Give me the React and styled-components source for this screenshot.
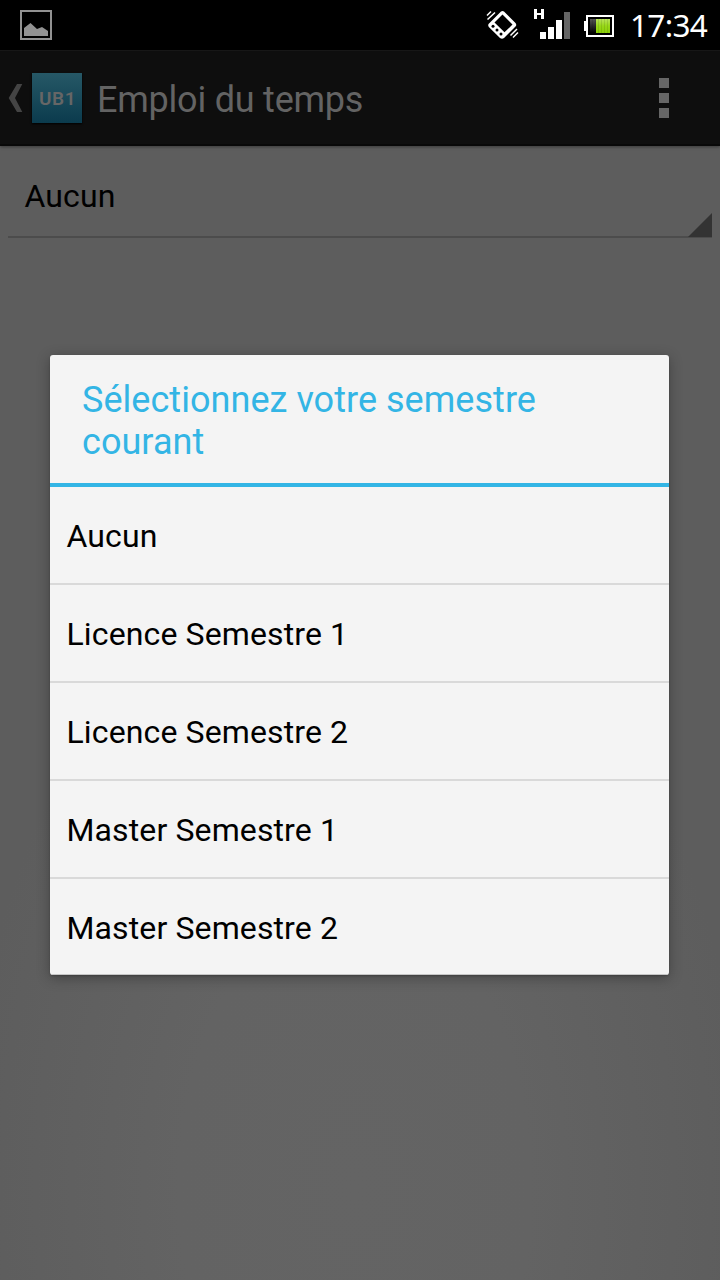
import React from "react";
import styled, { createGlobalStyle } from "styled-components";

const GlobalStyle = createGlobalStyle`
  * { box-sizing: border-box; }
  body { margin: 0; background: #5d5d5d; }
`;

const Screen = styled.div`
  position: relative;
  width: 720px;
  height: 1280px;
  overflow: hidden;
  display: flex;
  flex-direction: column;
  font-family: Roboto, sans-serif;
  background: radial-gradient(ellipse 390px 640px at 355px 1190px, #646464 0%, #636363 45%, #5d5d5d 100%);
`;

const StatusBar = styled.header`
  height: 50px;
  flex: none;
  display: flex;
  justify-content: space-between;
  background: #000;
  padding: 0 12px 0 20px;
`;

const StatusIcons = styled.div`
  display: flex;
`;

const StatusSvg = styled.svg`
  display: block;
  flex: none;
  margin-right: ${(p) => p.$gap || 0}px;
`;

const Clock = styled.time`
  width: 78px;
  font-family: "Noto Sans", sans-serif;
  font-size: 31.5px;
  line-height: 49px;
  letter-spacing: -0.7px;
  color: #fff;
  white-space: nowrap;
`;

const ActionBar = styled.nav`
  height: 96px;
  flex: none;
  display: flex;
  align-items: center;
  padding: 1px 51px 0 8px;
  background: #0e0e0e;
  border-top: 1px solid #171717;
  border-bottom: 2px solid #080808;
  box-shadow: 0 1px 3px rgba(0, 0, 0, 0.4);
`;

const AppLogo = styled.div`
  width: 50px;
  height: 50px;
  margin-left: 9px;
  padding: 1px 0 0 1px;
  display: flex;
  align-items: center;
  justify-content: center;
  background: linear-gradient(#265866, #0b3b4d);
  box-shadow: 0 1px 2px #000;
  color: #666;
  font-size: 19px;
  font-weight: 600;
  letter-spacing: 0.6px;
`;

const ScreenTitle = styled.h1`
  margin: 3px 0 0 15px;
  flex: 1;
  font-size: 36px;
  line-height: 42px;
  font-weight: 400;
  color: #636363;
  letter-spacing: -0.22px;
`;

const Overflow = styled.div`
  display: flex;
  flex-direction: column;
  gap: 5px;
`;

const OverflowDot = styled.i`
  width: 10px;
  height: 10px;
  background: #666;
`;

const Spinner = styled.div`
  height: 92px;
  margin: 0 8px;
  display: flex;
  align-items: flex-end;
  justify-content: space-between;
  border-bottom: 2px solid #4c4c4c;
`;

const SpinnerValue = styled.span`
  padding-left: 16.5px;
  margin-bottom: 21px;
  font-size: 32px;
  line-height: 38px;
  letter-spacing: 0.1px;
  color: #000;
`;

const SpinnerArrow = styled.svg`
  display: block;
  margin-bottom: -1px;
`;

const Dialog = styled.section`
  position: absolute;
  left: 50px;
  top: 355px;
  width: 619px;
  height: 620px;
  overflow: hidden;
  background: #f4f4f4;
  border-radius: 3px;
  box-shadow: 0 3px 14px rgba(0, 0, 0, 0.3), 0 1px 2px rgba(0, 0, 0, 0.2);
`;

const DialogTitle = styled.h2`
  height: 132px;
  margin: 0;
  padding: 24px 32px 0;
  border-bottom: 4px solid #33b5e5;
  font-size: 36px;
  line-height: 42px;
  font-weight: 400;
  letter-spacing: 0.04px;
  color: #33b5e5;
`;

const Options = styled.ul`
  margin: 0;
  padding: 0;
  list-style: none;
`;

const Option = styled.li`
  height: 98px;
  padding-left: 16.5px;
  border-bottom: 2px solid #d9d9d9;
  font-size: 32px;
  line-height: 98px;
  letter-spacing: 0.12px;
  color: #000;

  &:last-child {
    height: 96px;
    border-bottom: 1px solid #c6c6c6;
  }
`;

const semesters = [
  "Aucun",
  "Licence Semestre 1",
  "Licence Semestre 2",
  "Master Semestre 1",
  "Master Semestre 2",
];

function GalleryIcon() {
  return (
    <StatusSvg width="32" height="50" viewBox="0 0 32 50">
      <rect x="1" y="11" width="30" height="28" fill="none" stroke="#929292" strokeWidth="2" />
      <path d="M4 36V28L10.500 23L17 29L22 27L28 31V36Z" fill="#929292" />
    </StatusSvg>
  );
}

function VibrateIcon() {
  return (
    <StatusSvg width="34" height="50" viewBox="486 0 34 50" $gap={13}>
      <path
        fill="#fff"
        fillRule="evenodd"
        d="M501 11.500Q502.500 10.500 504 11.500L515.500 23Q517 25 515.500 26.500L504 38Q502 39.500 500 38L488.800 27Q487.500 25 489 23.500ZM502.500 14.500L494.500 22.500L504.500 32.300L512.500 24.500Z"
      />
      <g fill="#000">
        <circle cx="493" cy="26.300" r="1.500" />
        <circle cx="497" cy="30" r="1.500" />
        <circle cx="501" cy="34" r="1.500" />
      </g>
      <path
        d="M487 15.500L491 11.500M487.500 19.500L495 12.500M510.500 35.500L517 29M513 37.500L518 32.500"
        stroke="#fff"
        strokeWidth="1.500"
      />
    </StatusSvg>
  );
}

function SignalIcon() {
  return (
    <StatusSvg width="37" height="50" viewBox="533 0 37 50" $gap={14}>
      <path d="M534 9h3v4h4v-4h3v10h-3v-4h-4v4h-3z" fill="#fff" />
      <path d="M540 32h6v7h-6zM548 27h6v12h-6zM556 20h6v19h-6z" fill="#fff" />
      <path d="M564 12h6v27h-6z" fill="#656565" />
    </StatusSvg>
  );
}

function BatteryIcon() {
  return (
    <StatusSvg width="30" height="50" viewBox="584 0 30 50" $gap={16}>
      <defs>
        <linearGradient id="charge" x1="0" y1="0" x2="0" y2="1">
          <stop offset="0" stopColor="#b8e45a" />
          <stop offset="0.5" stopColor="#98d818" />
          <stop offset="1" stopColor="#8bcf08" />
        </linearGradient>
        <linearGradient id="drained" x1="0" y1="0" x2="0" y2="1">
          <stop offset="0" stopColor="#555" />
          <stop offset="1" stopColor="#000" />
        </linearGradient>
      </defs>
      <path d="M584 21h2v10h-2z" fill="#fff" />
      <rect x="587" y="16" width="26" height="20" fill="none" stroke="#fff" strokeWidth="2" />
      <path d="M590 19h6v14h-6z" fill="url(#drained)" />
      <path d="M596 19h14v14h-14z" fill="url(#charge)" />
      <path
        d="M592.500 19v14M595.500 19v14M598.500 19v14M601.500 19v14M604.500 19v14M607.500 19v14"
        stroke="#000"
        strokeOpacity="0.1"
      />
    </StatusSvg>
  );
}

export default function App() {
  return (
    <>
      <GlobalStyle />
      <Screen>
        <StatusBar>
          <GalleryIcon />
          <StatusIcons>
            <VibrateIcon />
            <SignalIcon />
            <BatteryIcon />
            <Clock>17:34</Clock>
          </StatusIcons>
        </StatusBar>
        <ActionBar>
          <svg width="15" height="28" viewBox="0 0 15 28">
            <path d="M9 0H14.300L7 14L14.300 28H9L0.700 14Z" fill="#444" />
          </svg>
          <AppLogo>UB1</AppLogo>
          <ScreenTitle>Emploi du temps</ScreenTitle>
          <Overflow>
            <OverflowDot />
            <OverflowDot />
            <OverflowDot />
          </Overflow>
        </ActionBar>
        <Spinner>
          <SpinnerValue>Aucun</SpinnerValue>
          <SpinnerArrow width="24" height="24" viewBox="0 0 24 24">
            <path d="M24 0V24H0Z" fill="#333" />
          </SpinnerArrow>
        </Spinner>
        <Dialog role="dialog">
          <DialogTitle>Sélectionnez votre semestre courant</DialogTitle>
          <Options>
            {semesters.map((name) => (
              <Option key={name}>{name}</Option>
            ))}
          </Options>
        </Dialog>
      </Screen>
    </>
  );
}
